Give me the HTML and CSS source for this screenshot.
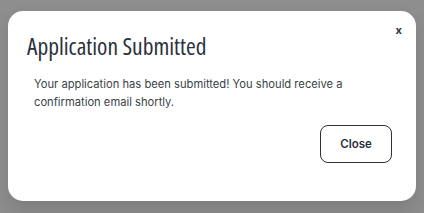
FILE: index.html
```html
<!DOCTYPE html>
<html lang="en">
<head>
    <meta charset="UTF-8">
    <title>Application Submitted</title>
    <link rel="stylesheet" href="styles.css">
</head>
<body>

<div class="overlay">
    <div class="modal">
        <button class="close-x" aria-label="Close">x</button>
        <h2 class="modal-title">Application Submitted</h2>
        <p class="modal-text">Your application has been submitted! You should receive a confirmation email shortly.</p>
        <div class="modal-footer">
            <button class="btn-close">Close</button>
        </div>
    </div>
</div>

</body>
</html>
```

FILE: styles.css
```css
body {
    margin: 0;
    padding: 0;
    background-color: #8e8e8e;
    font-family: Inter, "Noto Sans", sans-serif;
}
.overlay {
    height: 213px;
    padding: 11px 8px 0 8px;
    box-sizing: border-box;
}
.modal {
    position: relative;
    background-color: white;
    border-radius: 15px;
    height: 190px;
    box-sizing: border-box;
    padding: 21px 24px 0 19px;
    box-shadow: 0 10px 20px rgba(0, 0, 0, 0.12);
}
.close-x {
    position: absolute;
    top: 12px;
    right: 14px;
    background: none;
    border: none;
    padding: 0;
    font-family: Inter, sans-serif;
    font-size: 11px;
    font-weight: 700;
    color: #2d3340;
    cursor: pointer;
}
.modal-title {
    margin: 0;
    font-family: "Open Sans", sans-serif;
    font-stretch: 75%;
    font-weight: 400;
    font-size: 23.5px;
    line-height: 28px;
    color: #2b313b;
}
.modal-text {
    margin: 15px 0 0 7px;
    font-size: 11.2px;
    line-height: 18px;
    color: #3a3f47;
}
.modal-footer {
    display: flex;
    justify-content: flex-end;
    margin-top: 14px;
}
.btn-close {
    width: 72px;
    height: 38px;
    background: white;
    border: 1px solid #2b313b;
    border-radius: 8px;
    font-family: Inter, sans-serif;
    font-size: 11.5px;
    font-weight: 600;
    color: #2b313b;
    cursor: pointer;
}
```
